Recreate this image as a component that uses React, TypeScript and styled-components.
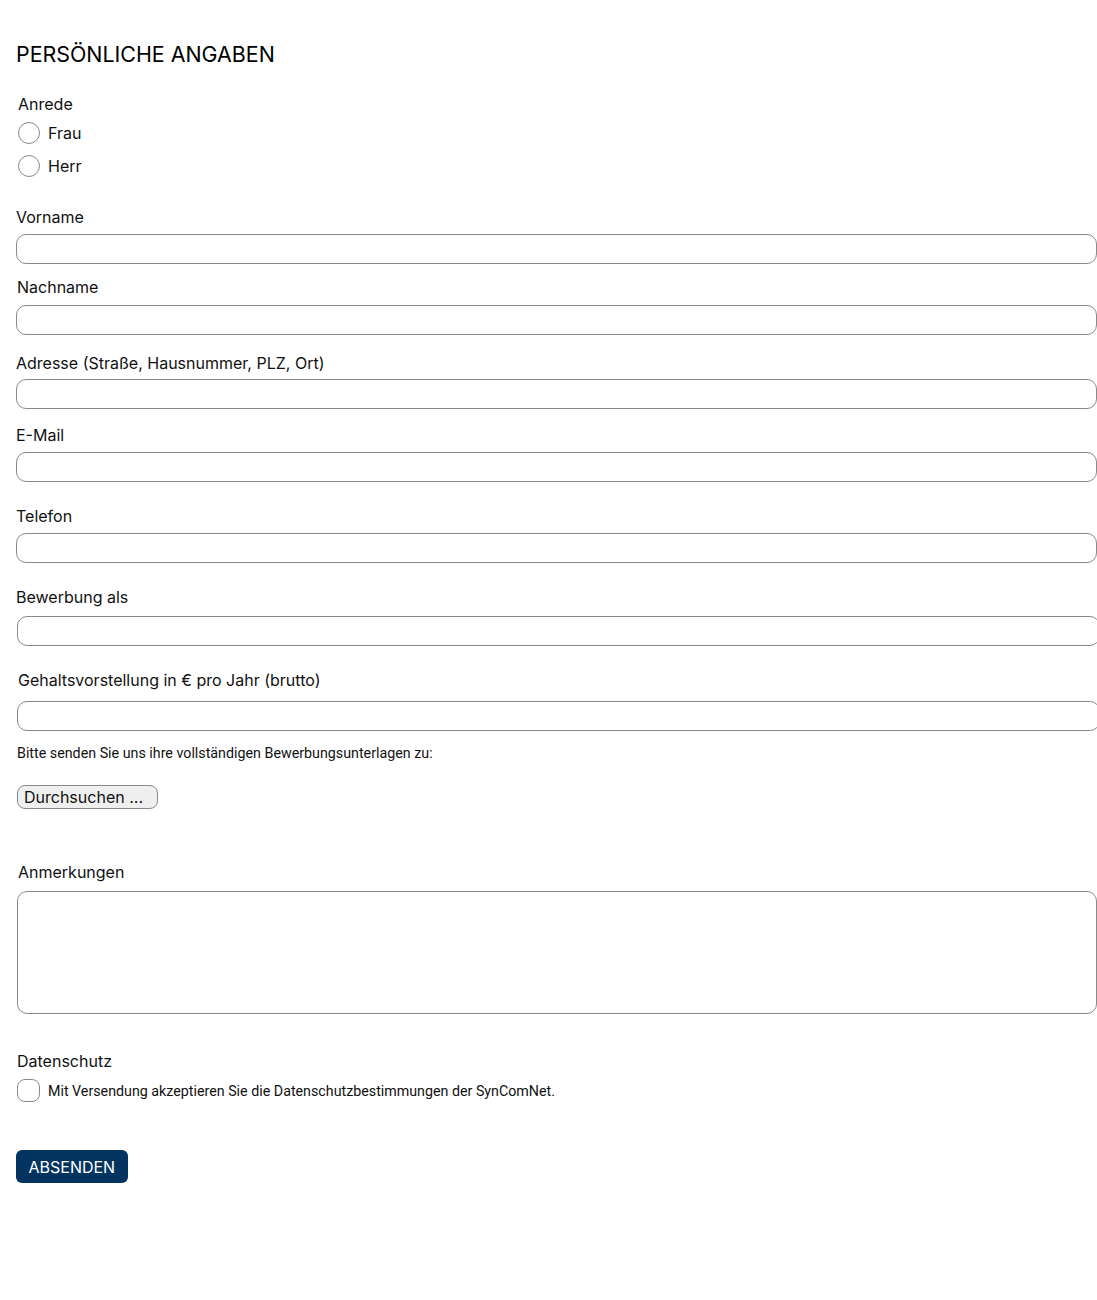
import React from 'react';
import styled, { createGlobalStyle } from 'styled-components';

const GlobalStyle = createGlobalStyle`
  html, body {
    margin: 0;
    padding: 0;
    background: #fff;
    overflow-x: hidden;
  }
  body {
    font-family: Inter, "Noto Sans", sans-serif;
    color: #111;
  }
`;

type FieldDef = {
  label: string;
  gap: number;
  inputGap: number;
  indent: number;
  shift?: number;
};

const fields: FieldDef[] = [
  { label: 'Vorname', gap: 30, inputGap: 7, indent: 0 },
  { label: 'Nachname', gap: 13, inputGap: 8, indent: 1 },
  { label: 'Adresse (Straße, Hausnummer, PLZ, Ort)', gap: 18, inputGap: 6, indent: 0 },
  { label: 'E-Mail', gap: 16, inputGap: 7, indent: 0 },
  { label: 'Telefon', gap: 24, inputGap: 7, indent: 0 },
  { label: 'Bewerbung als', gap: 24, inputGap: 9, indent: 0, shift: 1 },
  { label: 'Gehaltsvorstellung in € pro Jahr (brutto)', gap: 24, inputGap: 11, indent: 2, shift: 1 },
];

function App() {
  return (
    <Page>
      <GlobalStyle />
      <Heading>PERSÖNLICHE ANGABEN</Heading>

      <Label $gap={26} $indent={2}>Anrede</Label>
      <RadioGroup>
        <RadioRow>
          <Radio />
          <span>Frau</span>
        </RadioRow>
        <RadioRow>
          <Radio />
          <span>Herr</span>
        </RadioRow>
      </RadioGroup>

      {fields.map((f) => (
        <React.Fragment key={f.label}>
          <Label $gap={f.gap} $indent={f.indent}>{f.label}</Label>
          <Input $gap={f.inputGap} $shift={f.shift || 0} />
        </React.Fragment>
      ))}

      <Note>Bitte senden Sie uns ihre vollständigen Bewerbungsunterlagen zu:</Note>
      <FileButton>Durchsuchen ...</FileButton>

      <Label $gap={53} $indent={2}>Anmerkungen</Label>
      <TextArea />

      <Label $gap={37} $indent={1}>Datenschutz</Label>
      <CheckRow>
        <Check />
        <CheckText>Mit Versendung akzeptieren Sie die Datenschutzbestimmungen der SynComNet.</CheckText>
      </CheckRow>

      <Submit>ABSENDEN</Submit>
      <Spacer />
    </Page>
  );
}

const Page = styled.div`
  display: flex;
  flex-direction: column;
  align-items: flex-start;
  padding: 41px 0 0 16px;
  width: 1081px;
`;

const Heading = styled.h1`
  margin: 0;
  font-size: 21.4px;
  line-height: 27px;
  font-weight: 400;
  color: #000;
`;

const Label = styled.label<{ $gap: number; $indent: number }>`
  display: block;
  margin-top: ${(p) => p.$gap}px;
  margin-left: ${(p) => p.$indent}px;
  font-size: 16px;
  line-height: 20px;
  color: #111;
`;

const RadioGroup = styled.div`
  display: flex;
  flex-direction: column;
  gap: 11px;
  margin-top: 8px;
  margin-left: 2px;
`;

const RadioRow = styled.div`
  display: flex;
  align-items: center;
  gap: 8px;
  height: 22px;
  font-size: 16px;
  color: #111;
`;

const Radio = styled.span`
  box-sizing: border-box;
  width: 22px;
  height: 22px;
  border: 1px solid #8a8a8a;
  border-radius: 50%;
  background: #fff;
`;

const Input = styled.div<{ $gap: number; $shift: number }>`
  box-sizing: border-box;
  margin-top: ${(p) => p.$gap}px;
  margin-left: ${(p) => p.$shift}px;
  width: ${(p) => 1081 + p.$shift * 2}px;
  height: 30px;
  border: 1px solid #8a8a8a;
  border-radius: 10px;
  background: #fff;
`;

const Note = styled.p`
  margin: 14px 0 0 1px;
  font-family: Roboto, "Liberation Sans", sans-serif;
  font-size: 14.28px;
  line-height: 17px;
  color: #111;
`;

const FileButton = styled.button`
  box-sizing: border-box;
  margin: 23px 0 0 1px;
  width: 141px;
  height: 24px;
  padding: 0 6px;
  text-align: left;
  font-family: Inter, sans-serif;
  font-size: 16px;
  color: #111;
  background: #efefef;
  border: 1px solid #8a8a8a;
  border-radius: 8px;
`;

const TextArea = styled.div`
  box-sizing: border-box;
  margin: 9px 0 0 1px;
  width: 1080px;
  height: 123px;
  border: 1px solid #8a8a8a;
  border-radius: 10px;
`;

const CheckRow = styled.div`
  display: flex;
  align-items: center;
  gap: 8px;
  margin: 8px 0 0 1px;
`;

const Check = styled.span`
  box-sizing: border-box;
  width: 23px;
  height: 23px;
  border: 1px solid #8a8a8a;
  border-radius: 8px;
`;

const CheckText = styled.span`
  font-family: Roboto, "Liberation Sans", sans-serif;
  font-size: 14.25px;
  color: #111;
`;

const Submit = styled.button`
  margin-top: 48px;
  height: 33px;
  padding: 0 12.5px;
  font-family: Inter, sans-serif;
  font-size: 16px;
  color: #fff;
  background: #03335f;
  border: none;
  border-radius: 6px;
`;

const Spacer = styled.div`
  height: 117px;
`;

export default App;
